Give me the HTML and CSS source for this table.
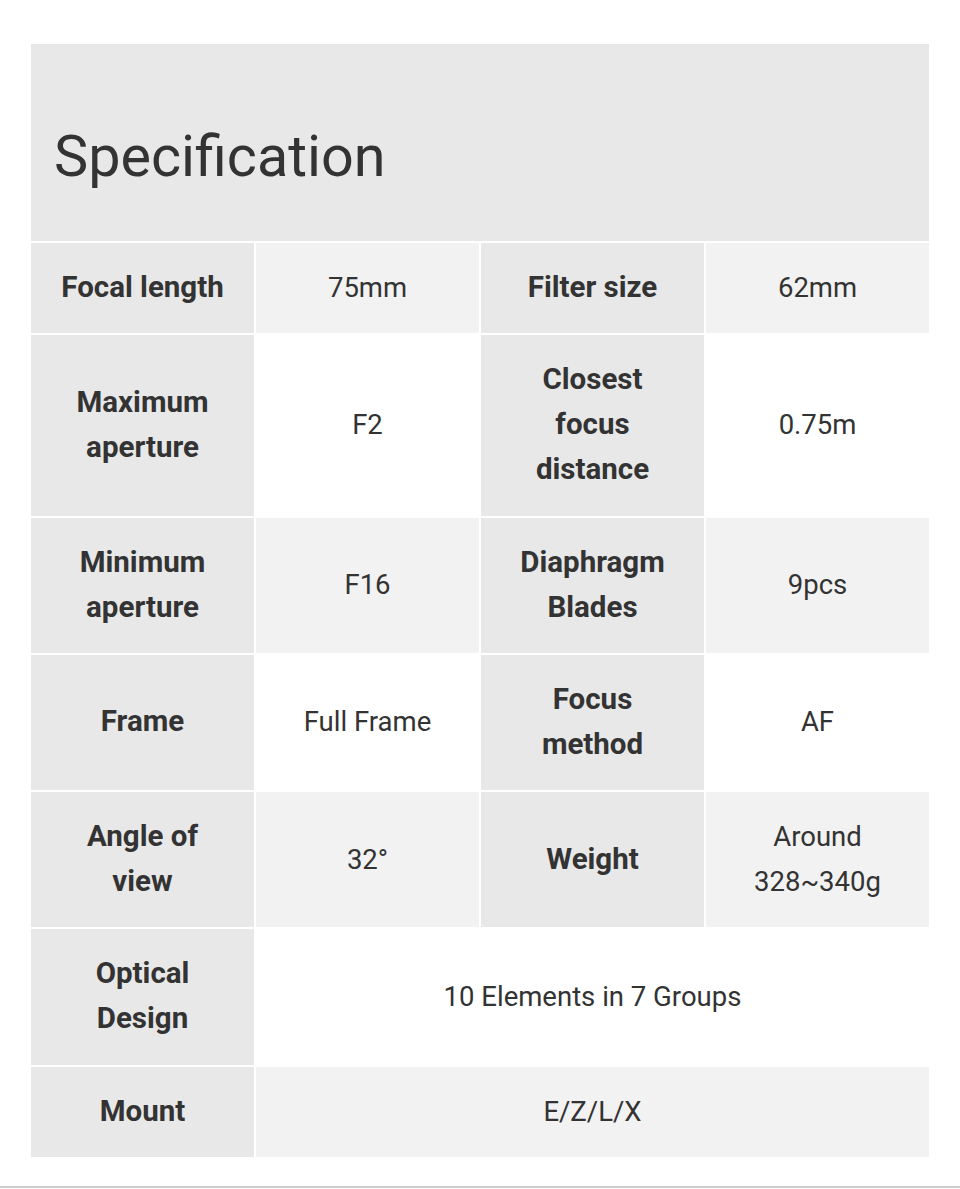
FILE: index.html
```html
<!DOCTYPE html>
<html>
<head>
<meta charset="utf-8">
<link rel="stylesheet" href="styles.css">
</head>
<body>
<div class="page">
  <div class="spec">
    <div class="head"><h1 class="title">Specification</h1></div>
    <div class="grid">
      <div class="cell label">Focal length</div>
      <div class="cell alt">75mm</div>
      <div class="cell label">Filter size</div>
      <div class="cell alt">62mm</div>

      <div class="cell label">Maximum<br>aperture</div>
      <div class="cell">F2</div>
      <div class="cell label">Closest<br>focus<br>distance</div>
      <div class="cell">0.75m</div>

      <div class="cell label">Minimum<br>aperture</div>
      <div class="cell alt">F16</div>
      <div class="cell label">Diaphragm<br>Blades</div>
      <div class="cell alt">9pcs</div>

      <div class="cell label">Frame</div>
      <div class="cell">Full Frame</div>
      <div class="cell label">Focus<br>method</div>
      <div class="cell">AF</div>

      <div class="cell label">Angle of<br>view</div>
      <div class="cell alt">32°</div>
      <div class="cell label">Weight</div>
      <div class="cell alt">Around<br>328~340g</div>

      <div class="cell label">Optical<br>Design</div>
      <div class="cell wide">10 Elements in 7 Groups</div>

      <div class="cell label">Mount</div>
      <div class="cell wide alt">E/Z/L/X</div>
    </div>
  </div>
  <div class="rule"></div>
</div>
</body>
</html>
```

FILE: styles.css
```css
html, body {
  margin: 0;
  padding: 0;
  background: #ffffff;
}
.page {
  font-family: Roboto, "Liberation Sans", sans-serif;
  color: #333333;
  padding-top: 44px;
}
.spec {
  margin: 0 31px;
  display: flex;
  flex-direction: column;
  gap: 2px;
}
.head {
  background: #e8e8e8;
  height: 197px;
  box-sizing: border-box;
  padding: 78px 0 0 23px;
}
.title {
  margin: 0;
  font-size: 57.5px;
  font-weight: 400;
  line-height: 1.2;
  color: #333333;
}
.grid {
  display: grid;
  grid-template-columns: repeat(4, 1fr);
  gap: 2px;
}
.cell {
  display: flex;
  align-items: center;
  justify-content: center;
  text-align: center;
  font-size: 27.5px;
  line-height: 45px;
  padding: 22px 6px 23.3px;
  background: #ffffff;
  color: #333333;
}
.cell.label {
  background: #e8e8e8;
  font-weight: 700;
  font-size: 29.5px;
}
.cell.alt {
  background: #f2f2f2;
}
.cell.wide {
  grid-column: span 3;
}
.rule {
  margin-top: 29px;
  height: 2px;
  background: #cccccc;
}
```
